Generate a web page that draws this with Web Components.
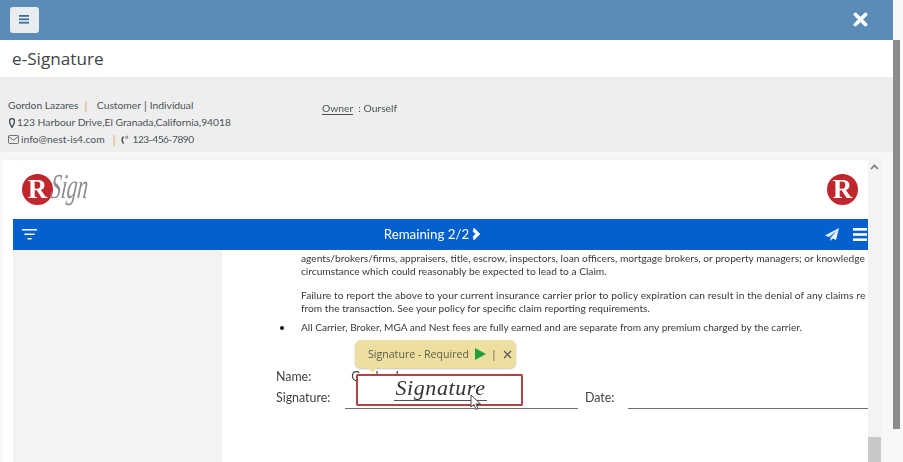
<!DOCTYPE html>
<html>
<head>
<meta charset="utf-8">
<title>e-Signature</title>
<style>
  html, body { margin: 0; height: 100%; overflow: hidden; background: #f6f7f8; }
  body { font-family: "Noto Sans", sans-serif; color: #444; }
  esign-app { filter: blur(0.35px); }
</style>
</head>
<body>
<esign-app>
  <top-bar></top-bar>
  <page-title>e-Signature</page-title>
  <contact-info></contact-info>
  <rsign-viewer>
    <doc-page></doc-page>
  </rsign-viewer>
</esign-app>

<script>
class EsignApp extends HTMLElement {
  constructor() {
    super();
    this.attachShadow({ mode: "open" });
    this.shadowRoot.innerHTML = `
    <style>
      :host { display: flex; width: 900px; height: 462px; overflow: hidden; }
      .main { width: 893px; display: flex; flex-direction: column; flex: none; }
      .scroll { width: 7px; height: 389px; margin-top: 40px; background: #8b8b8b; flex: none; }
    </style>
    <div class="main"><slot></slot></div>
    <div class="scroll"></div>`;
  }
}

class TopBar extends HTMLElement {
  constructor() {
    super();
    this.attachShadow({ mode: "open" });
    this.shadowRoot.innerHTML = `
    <style>
      :host { display: flex; align-items: center; justify-content: space-between; height: 40px; box-sizing: border-box; background: #5a8cb7; padding: 0 25px 1px 10px; flex: none; }
      button { width: 29px; height: 26px; border: none; border-radius: 3px; background: #e9edf0; padding: 0; display: flex; align-items: center; justify-content: center; }
      svg { display: block; }
    </style>
    <button><svg width="11" height="9" viewBox="0 0 11 9" fill="#44709a"><rect width="10" height="1.8" y="0"/><rect width="10" height="1.8" y="3.4"/><rect width="10" height="1.8" y="6.8"/></svg></button>
    <svg width="15" height="15" viewBox="0 0 15 15"><path d="M2.5 2.5 L12.5 12.5 M12.5 2.5 L2.5 12.5" stroke="#fff" stroke-width="3.8" stroke-linecap="round"/></svg>`;
  }
}

class PageTitle extends HTMLElement {
  constructor() {
    super();
    this.attachShadow({ mode: "open" });
    this.shadowRoot.innerHTML = `
    <style>
      :host { display: block; height: 37px; padding-left: 12px; box-sizing: border-box; background: #fff; font: 400 17.2px/37px "Open Sans", sans-serif; color: #3f4448; flex: none; }
    </style>
    <slot></slot>`;
  }
}

class ContactInfo extends HTMLElement {
  constructor() {
    super();
    this.attachShadow({ mode: "open" });
    this.shadowRoot.innerHTML = `
    <style>
      :host { display: grid; grid-template-columns: 314px 1fr; height: 75px; box-sizing: border-box; padding: 20px 8px 0; background: #eeeeee; font: 400 10.3px/17px "Lato", sans-serif; color: #4a5256; flex: none; }
      .row { display: flex; align-items: center; height: 17px; white-space: nowrap; }
      .sep { color: #d9a35c; margin: 0 7px 0 6px; font-size: 11px; }
      .sep.tight { margin: 0 3px; color: #555; }
      .sep.mail { margin: 0 5px 0 8px; }
      .tel { letter-spacing: -.5px; }
      svg { flex: none; margin-right: 2px; }
      .pin { margin: 0 2px 0 1px; }
      .owner { height: 17px; margin-top: 3px; }
      u { text-underline-offset: 2px; }
    </style>
    <div>
      <div class="row">Gordon Lazares<span class="sep">|</span>&nbsp;Customer<span class="sep tight">|</span>Individual</div>
      <div class="row"><svg class="pin" width="6" height="10" viewBox="0 0 6 10"><path d="M3 .6a2.5 2.5 0 0 0-2.500 2.600C.5 5 3 9.500 3 9.500S5.500 5 5.500 3.200A2.500 2.500 0 0 0 3 .6z" fill="none" stroke="#4a5256" stroke-width="1.500"/></svg>123 Harbour Drive,El Granada,California,94018</div>
      <div class="row"><svg width="11" height="9" viewBox="0 0 11 9" fill="none" stroke="#4a5256" stroke-width=".8"><rect x=".5" y=".5" width="10" height="8" rx="1"/><path d="M.8 1.500 5.500 5.200 10.200 1.500"/></svg>info@nest-is4.com<span class="sep mail">|</span><svg width="10" height="10" viewBox="0 0 10 10" fill="none" stroke="#4a5256"><path d="M3.600 1.600C1.800 3 1.500 6.400 3.600 8.600" stroke-width="1.500"/><path d="M6 1v3M7.600 .6v3" stroke-width=".7"/></svg><span class="tel">123-456-7890</span></div>
    </div>
    <div class="owner"><u>Owner</u>&nbsp; : Ourself</div>`;
  }
}

class RsignViewer extends HTMLElement {
  constructor() {
    super();
    this.attachShadow({ mode: "open" });
    this.shadowRoot.innerHTML = `
    <style>
      :host { display: flex; flex: 1; min-height: 0; margin: 7px 12px 0 3px; background: #fff; position: relative; overflow: hidden; border-top: 1px solid #f1f3f3; }
      .view { flex: 1; min-width: 0; display: flex; flex-direction: column; padding-left: 10px; }
      .logos { height: 59px; flex: none; display: flex; align-items: center; justify-content: space-between; padding: 0 10px 0 9px; }
      .brand { display: flex; align-items: center; }
      .r { width: 31px; height: 31px; border-radius: 50%; background: #c0272d; color: #fff; font: 700 27px/31px "Liberation Serif", serif; text-align: center; flex: none; }
      .sign { font: italic 400 35px/35px "Liberation Serif", serif; color: #8a8c8f; margin: -6px 0 0 -2px; transform: scaleX(.6) skewX(-10deg); transform-origin: left center; width: 36px; }
      .bar { height: 31px; flex: none; background: #0560cf; color: #fff; display: flex; align-items: center; justify-content: space-between; padding: 0 1px 0 9px; font: 400 13.3px "Lato", sans-serif; }
      .mid { display: flex; align-items: center; gap: 3px; margin: -1px 0 0 4px; }
      .right { display: flex; align-items: center; gap: 14px; }
      .track { width: 13px; background: #f3f3f3; flex: none; position: relative; display: flex; flex-direction: column; justify-content: space-between; align-items: center; }
      .thumb { width: 13px; height: 25px; background: #c8c8c8; }
      svg { display: block; }
      .doc { flex: 1; min-height: 0; }
    </style>
    <div class="view">
      <div class="logos">
        <div class="brand"><div class="r">R</div><div class="sign">Sign</div></div>
        <div class="r">R</div>
      </div>
      <div class="bar">
        <svg width="15" height="11" viewBox="0 0 15 11" fill="#fff"><rect width="15" height="1.500"/><rect x="2.500" y="4.500" width="10" height="1.500"/><rect x="5.500" y="9" width="4" height="1.500"/></svg>
        <div class="mid">Remaining 2/2 <svg width="10" height="14" viewBox="0 0 10 14"><path d="M2 1 8 7 2 13 1 9.500 4 7 1 4.500z" fill="#fff" stroke="#fff" stroke-width=".6"/></svg></div>
        <div class="right">
          <svg width="14" height="13" viewBox="0 0 14 13" fill="#e6f0fa"><path d="M14 0 0 7.500 4 9 12 2.500 5.500 9.800V13L7.800 10.500 11 12z"/></svg>
          <svg width="14" height="13" viewBox="0 0 14 13" fill="#fff"><rect width="14" height="2.600"/><rect y="5.200" width="14" height="2.600"/><rect y="10.400" width="14" height="2.600"/></svg>
        </div>
      </div>
      <div class="doc"><slot></slot></div>
    </div>
    <div class="track">
      <svg width="9" height="6" viewBox="0 0 9 6" style="margin-top:4px"><path d="M1 5 4.500 1.500 8 5" fill="none" stroke="#777" stroke-width="1.600"/></svg>
      <div class="thumb"></div>
    </div>`;
  }
}

class DocPage extends HTMLElement {
  constructor() {
    super();
    this.attachShadow({ mode: "open" });
    this.shadowRoot.innerHTML = `
    <style>
      :host { display: flex; height: 100%; font: 400 10.2px/13px "Lato", sans-serif; color: #35393c; }
      .side { width: 209px; background: #f3f3f3; flex: none; }
      .page { flex: 1; min-width: 0; overflow: hidden; position: relative; }
      .copy { padding: 2px 0 0 79px; white-space: nowrap; height: 97px; box-sizing: border-box; }
      .copy div { height: 12.5px; line-height: 12.5px; }
      .gap { height: 12px !important; }
      .gap2 { height: 7px !important; }
      .wide { letter-spacing: .1px; }
      .last { font-size: 10.1px; }
      .bullet { position: absolute; left: 58px; top: 76px; width: 4px; height: 4px; border-radius: 50%; background: #111; }
      .form { display: grid; grid-template-columns: 69px 233px 50px 1fr; padding: 23px 0 0 54px; font-size: 12.4px; line-height: 19px; color: #3f4245; white-space: nowrap; }
      .name { grid-column: 1 / 5; height: 17px; line-height: 16px; margin-top: -1px; }
      .line { border-bottom: 1px solid #6f6f6f; height: 22px; }
      .sig-label { margin-top: 2px; }
      .date { margin-left: 7px; margin-top: 2px; }
      .name span { margin-left: 40px; }
      .tip { position: absolute; left: 133px; top: 90px; height: 28px; width: 161px; box-sizing: border-box; background: #ecdf9f; border-radius: 6px; box-shadow: 0 1px 2px rgba(0,0,0,.25); display: flex; align-items: center; padding-left: 13px; font: 400 10.6px "Open Sans", sans-serif; color: #5d5d4e; white-space: nowrap; }
      .tip svg { margin-left: 6px; }
      .tip b { font-weight: 400; margin: 0 6px 0 5px; }
      .tip::after { content: ""; position: absolute; left: 14px; bottom: -3px; width: 7px; height: 7px; background: #ecdf9f; transform: rotate(45deg); }
      .field { position: absolute; left: 134px; top: 124px; width: 167px; height: 32px; box-sizing: border-box; border: 2px solid #a8464c; border-radius: 2px; background: #fff; display: flex; justify-content: center; padding-left: 2px; box-shadow: 0 0 1px rgba(0,0,0,.3); }
      .field span { font: italic 400 22px/26px "Liberation Serif", serif; letter-spacing: .6px; color: #333; border-bottom: 1px solid #555; height: 25px; margin-top: -1px; padding: 0 1px; }
      .cursor { position: absolute; left: 248px; top: 144px; }
    </style>
    <div class="side"></div>
    <div class="page">
      <div class="copy">
        <div>agents/brokers/firms, appraisers, title, escrow, inspectors, loan officers, mortgage brokers, or property managers; or knowledge</div>
        <div>circumstance which could reasonably be expected to lead to a Claim.</div>
        <div class="gap"></div>
        <div class="wide">Failure to report the above to your current insurance carrier prior to policy expiration can result in the denial of any claims re</div>
        <div>from the transaction. See your policy for specific claim reporting requirements.</div>
        <div class="gap2"></div>
        <div class="last">All Carrier, Broker, MGA and Nest fees are fully earned and are separate from any premium charged by the carrier.</div>
      </div>
      <i class="bullet"></i>
      <div class="form">
        <div class="name">Name:<span>Gordon Lazares</span></div>
        <div class="sig-label">Signature:</div>
        <div class="line"></div>
        <div class="date">Date:</div>
        <div class="line"></div>
      </div>
      <div class="tip">Signature - Required<svg width="11" height="12" viewBox="0 0 11 12"><path d="M0 0 11 6 0 12z" fill="#22a03c"/></svg><b>|</b><svg style="margin:0" width="9" height="9" viewBox="0 0 9 9"><path d="M1 1 8 8M8 1 1 8" stroke="#555" stroke-width="1.200"/></svg></div>
      <div class="field"><span>Signature</span></div>
      <svg class="cursor" width="12" height="17" viewBox="0 0 12 17"><path d="M1 1V13L4 10.500 6 15.500 8 14.500 6 10H10.500z" fill="#fff" stroke="#333" stroke-width=".9"/></svg>
    </div>`;
  }
}

customElements.define("esign-app", EsignApp);
customElements.define("top-bar", TopBar);
customElements.define("page-title", PageTitle);
customElements.define("contact-info", ContactInfo);
customElements.define("rsign-viewer", RsignViewer);
customElements.define("doc-page", DocPage);
</script>
</body>
</html>
